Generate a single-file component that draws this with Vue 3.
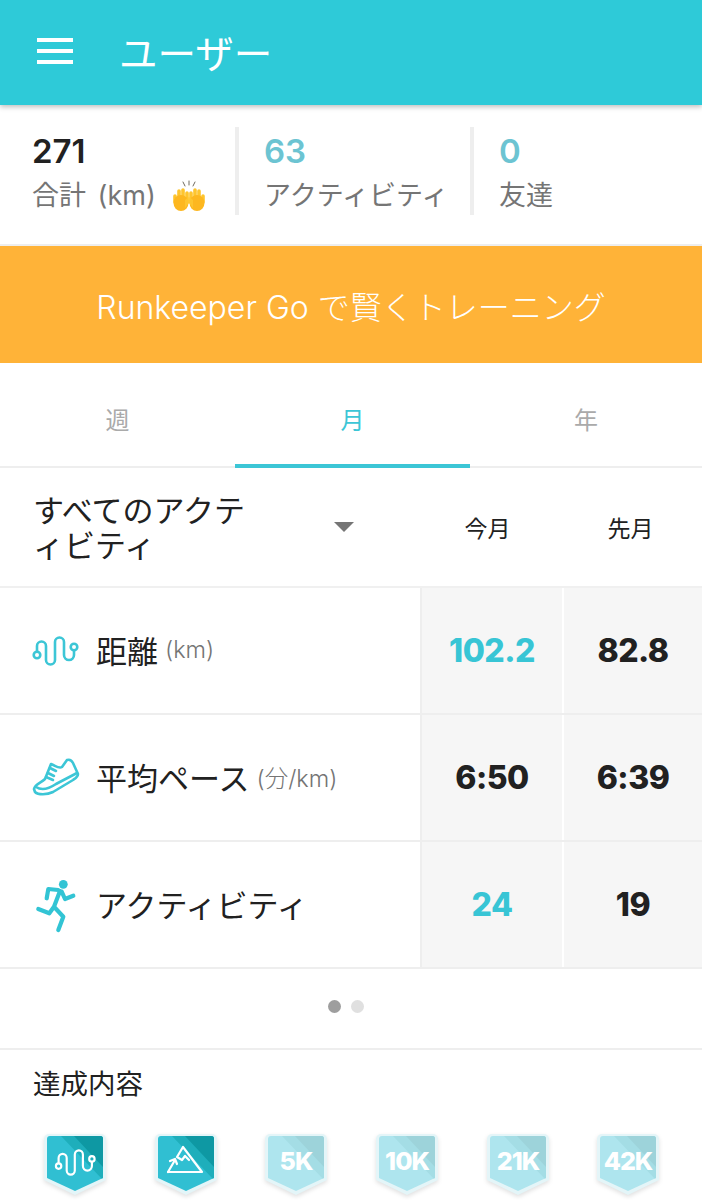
<template>
  <div class="page">
    <header class="topbar">
      <div class="burger"><i></i><i></i><i></i></div>
      <h1>ユーザー</h1>
    </header>

    <section class="stats">
      <div v-for="s in stats" :key="s.label" class="stat">
        <div class="stat-num" :class="{ teal: s.teal }">{{ s.value }}</div>
        <div class="stat-label">
          {{ s.label }}
          <svg v-if="s.hands" class="hands" viewBox="0 0 34 32" width="34" height="32">
            <g stroke="#6f6a60" stroke-width="1" stroke-linecap="round">
              <path d="M17 1v4M11 2l2 4M23 2l-2 4" />
            </g>
            <g fill="none" stroke="#fec52e" stroke-width="3.600" stroke-linecap="round">
              <path d="M3 16v6M7 11v10M11 10v10M15 13v8" />
              <path d="M31 16v6M27 11v10M23 10v10M19 13v8" />
            </g>
            <ellipse cx="9" cy="23" rx="7.500" ry="8" fill="#fdb71f" />
            <ellipse cx="25" cy="23" rx="7.500" ry="8" fill="#fdb71f" />
            <path d="M13 20l3.500-3 .5 6-4 5zM21 20l-3.500-3-.5 6 4 5z" fill="#fec52e" />
          </svg>
        </div>
      </div>
    </section>

    <div class="promo">Runkeeper Go で賢くトレーニング</div>

    <nav class="tabs">
      <div v-for="t in tabs" :key="t" class="tab" :class="{ active: t === tab }" @click="tab = t">{{ t }}</div>
    </nav>

    <div class="filter">
      <div class="filter-name">すべてのアクテ<br />ィビティ</div>
      <span class="caret"></span>
      <div class="col-head">今月</div>
      <div class="col-head">先月</div>
    </div>

    <div v-for="r in rows" :key="r.name" class="row">
      <div class="row-main">
        <svg class="row-icon" viewBox="0 0 48 48" width="48" height="48" v-html="r.icon"></svg>
        <span class="row-name">{{ r.name }}</span>
        <span v-if="r.unit" class="row-unit">{{ r.unit }}</span>
      </div>
      <div class="cell" :class="{ teal2: r.best }">{{ r.now }}</div>
      <div class="cell">{{ r.prev }}</div>
    </div>

    <div class="dots"><i class="on"></i><i></i></div>

    <section class="awards">
      <h2>達成内容</h2>
      <div class="badges">
        <svg v-for="(b, i) in badges" :key="i" class="badge" viewBox="0 0 70 68" width="70" height="68">
          <defs>
            <clipPath :id="'clip' + i">
              <path d="M7 6a3 3 0 0 1 3-3h50a3 3 0 0 1 3 3v39L35 58 7 45z" />
            </clipPath>
          </defs>
          <path class="badge-shadow" d="M4 6a5 5 0 0 1 5-5h52a5 5 0 0 1 5 5v41L35 62 4 47z" />
          <path fill="#e4f5f8" d="M4 6a5 5 0 0 1 5-5h52a5 5 0 0 1 5 5v41L35 62 4 47z" />
          <g :clip-path="'url(#clip' + i + ')'">
            <rect x="7" y="3" width="56" height="56" :fill="b.locked ? '#aee5ee' : '#30bfd2'" />
            <path d="M21 3h42v44z" :fill="b.locked ? '#a4dde5' : '#1eaebb'" />
            <path d="M34 3h29v31z" :fill="b.locked ? '#9dd3da' : '#0e98a3'" />
          </g>
          <text v-if="b.text" x="35" y="37" text-anchor="middle" class="badge-text">{{ b.text }}</text>
          <g v-else-if="b.icon === 'route'" fill="none" stroke="#fff" stroke-width="2.400" transform="translate(15 16) scale(.9)">
            <circle cx="4" cy="19" r="3" />
            <circle cx="41" cy="11" r="3" />
            <path d="M4 16v-6a4.500 4.500 0 0 1 9 0v14a4.500 4.500 0 0 0 9 0V6a4.500 4.500 0 0 1 9 0v13a5 5 0 0 0 10 0v-5" />
          </g>
          <g v-else fill="none" stroke="#fff" stroke-width="2.200" stroke-linejoin="round" stroke-linecap="round">
            <path d="M17 39h34L32 14l-6 10 5 3 3-4 4 4" />
            <path d="M17 39l7-12M19 28l5-2 2 5" />
          </g>
        </svg>
      </div>
    </section>
  </div>
</template>

<script setup>
import { ref } from 'vue'

const tab = ref('月')
const tabs = ['週', '月', '年']

const stats = [
  { value: '271', label: '合計 (km)', hands: true },
  { value: '63', label: 'アクティビティ', teal: true },
  { value: '0', label: '友達', teal: true },
]

const routeIcon = `<g fill="none" stroke="#3cc6d6" stroke-width="2.600" transform="translate(1 9)"><circle cx="4" cy="19" r="3.300"/><circle cx="41" cy="11" r="3.300"/><path d="M4 15.700V10a4.500 4.500 0 0 1 9 0v14a4.500 4.500 0 0 0 9 0V6a4.500 4.500 0 0 1 9 0v13a5 5 0 0 0 10 0v-4.700"/></g>`
const shoeIcon = `<g fill="none" stroke="#3cc6d6" stroke-width="2.600" stroke-linejoin="round" stroke-linecap="round"><path d="M2 35c1-5 7-6 11-10l6-15c5 2 8 5 11 3l5-7c3-1 5 1 6 3l5 11c0 3-2 4-5 6L21 38c-6 3-15 3-18 0z"/><path d="M4 33c6 4 14 1 20-3l21-11"/><path d="M18 14l6 3M16 19l6 3M14 23l7 3"/></g>`
const runnerIcon = `<g fill="none" stroke="#32c4d4" stroke-width="4.200" stroke-linecap="round" stroke-linejoin="round"><path d="M14.700 17.300L16.300 8l10 1M29.700 10.700L33 18l8.300-3.300M28 10l-6 15.700M22 25.700l-4.700 6.600-11-4.300M22 25.700l9.300 10-5 13.300"/></g><circle cx="31.300" cy="3.300" r="4.400" fill="#32c4d4"/>`

const rows = [
  { name: '距離', unit: '(km)', icon: routeIcon, now: '102.2', prev: '82.8', best: true },
  { name: '平均ペース', unit: '(分/km)', icon: shoeIcon, now: '6:50', prev: '6:39' },
  { name: 'アクティビティ', icon: runnerIcon, now: '24', prev: '19', best: true },
]

const badges = [
  { icon: 'route' },
  { icon: 'peak' },
  { text: '5K', locked: true },
  { text: '10K', locked: true },
  { text: '21K', locked: true },
  { text: '42K', locked: true },
]
</script>

<style>
html, body { margin: 0; background: #fff; }
</style>

<style scoped>
.page {
  width: 702px;
  height: 1200px;
  overflow: hidden;
  background: #fff;
  color: #212121;
  font-family: Inter, "Noto Sans CJK JP", sans-serif;
}
.topbar {
  height: 105px;
  background: #2ecad8;
  display: flex;
  align-items: center;
  padding-left: 37px;
  box-shadow: 0 2px 5px rgba(0, 0, 0, .25);
  position: relative;
}
.burger { width: 36px; display: flex; flex-direction: column; gap: 7px; margin-top: -4px; }
.burger i { height: 4px; background: #fff; }
.topbar h1 {
  margin: -4px 0 0 46px;
  font-size: 38.500px;
  font-weight: 400;
  color: #fff;
}
.stats {
  height: 139px;
  border-bottom: 2px solid #eee;
  display: grid;
  grid-template-columns: 235px 235px 1fr;
  align-items: center;
}
.stat {
  height: 88px;
  padding-left: 32px;
  margin-top: -7px;
  box-sizing: border-box;
}
.stat + .stat { border-left: 4px solid #eee; padding-left: 25px; }
.stat-num { font-size: 33px; font-weight: 600; line-height: 48px; }
.stat-num.teal { color: #6cc4d2; }
.stat-label {
  font-size: 27px;
  line-height: 38px;
  margin-top: 2px;
  color: #757575;
  display: flex;
  align-items: center;
  white-space: nowrap;
  word-spacing: 4px;
  gap: 16px;
}
.promo {
  height: 117px;
  background: #ffb338;
  color: #fff;
  font-size: 32px;
  font-weight: 300;
  display: flex;
  align-items: center;
  justify-content: center;
}
.tabs {
  height: 104px;
  display: grid;
  grid-template-columns: 235px 235px 1fr;
  border-bottom: 2px solid #eee;
  box-sizing: border-box;
  margin-top: 1px;
}
.tab {
  display: flex;
  align-items: center;
  justify-content: center;
  font-size: 24px;
  color: #aaa;
  margin-bottom: -2px;
  padding-top: 4px;
}
.tab.active {
  color: #3cc6d6;
  border-bottom: 4px solid #3cc6d6;
  box-sizing: border-box;
  padding-top: 8px;
}
.filter {
  height: 120px;
  display: grid;
  grid-template-columns: 301px 83px 141px 145px;
  align-items: center;
  padding-left: 33px;
  box-sizing: border-box;
  border-bottom: 2px solid #f0f0f0;
}
.filter-name { font-size: 31px; line-height: 35px; padding-top: 2px; }
.caret {
  width: 0;
  height: 0;
  border-left: 10px solid transparent;
  border-right: 10px solid transparent;
  border-top: 10px solid #757575;
}
.col-head { font-size: 23px; text-align: center; }
.row {
  height: 127px;
  display: grid;
  grid-template-columns: 422px 140px 1fr;
  border-bottom: 2px solid #eee;
  box-sizing: border-box;
}
.row-main {
  display: flex;
  align-items: center;
  padding-left: 32px;
  border-right: 2px solid #eee;
  box-sizing: border-box;
}
.row-icon { margin-right: 16px; flex: none; overflow: visible; }
.row-name { font-size: 31px; white-space: nowrap; margin-top: -2px; }
.row-unit { font-size: 23.500px; font-weight: 300; color: #757575; white-space: nowrap; margin-left: 7px; margin-top: -2px; }
.cell {
  background: #f6f6f6;
  display: flex;
  align-items: center;
  justify-content: center;
  font-size: 32px;
  font-weight: 800;
  letter-spacing: -.5px;
}
.cell:last-child { margin-left: 2px; }
.teal2 { color: #38c5d5; }
.dots {
  border-bottom: 2px solid #eee;
  display: flex;
  align-items: center;
  justify-content: center;
  gap: 10px;
  padding: 0 10px 4px 0;
  height: 75px;
}
.dots i { width: 13px; height: 13px; border-radius: 50%; background: #e0e0e0; }
.dots i.on { background: #9e9e9e; }
.awards h2 {
  margin: 18px 0 0 33px;
  font-size: 27.500px;
  font-weight: 400;
  line-height: 32px;
}
.badges {
  display: grid;
  grid-template-columns: repeat(6, 110.700px);
  padding: 33px 0 0 40px;
}
.badge { display: block; overflow: visible; }
.badge-shadow { fill: rgba(0, 0, 0, .12); transform: translateY(2px); filter: blur(2px); }
.badge-text { font-size: 25px; font-weight: 800; fill: #fff; letter-spacing: -1px; }
</style>
